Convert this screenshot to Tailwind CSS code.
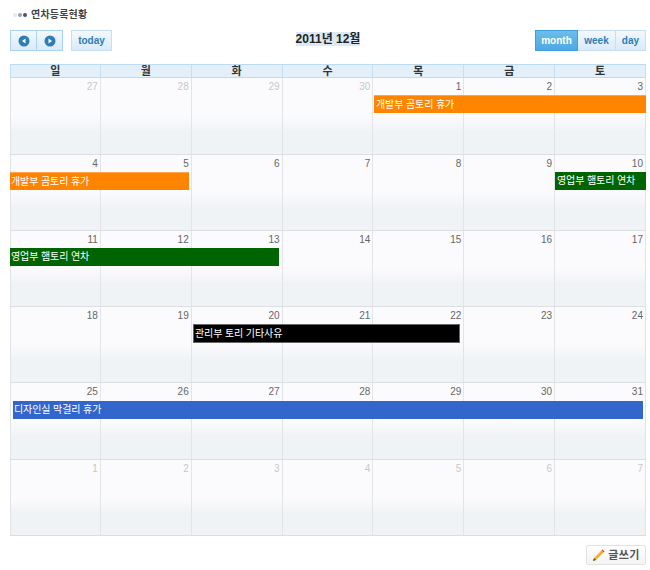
<!DOCTYPE html>
<html lang="ko">
<head>
    <meta charset="UTF-8">
    <title>연차등록현황</title>
    <script src="https://cdn.jsdelivr.net/npm/@tailwindcss/browser@4"></script>
</head>
<body class="bg-white font-['Liberation_Sans','Noto_Sans_CJK_KR',sans-serif]">
    <div class="w-[650px] h-[570px] pl-[10px] pr-[4px] overflow-hidden">
        <!-- Title -->
        <div class="h-[30px] pb-[1px] flex items-center gap-[4px]">
            <div class="flex items-center gap-[1px] ml-[3px]">
                <span class="w-[4px] h-[4px] rounded-full bg-gray-200"></span>
                <span class="w-[4px] h-[4px] rounded-full bg-gray-400"></span>
                <span class="w-[4px] h-[4px] rounded-full bg-gray-600"></span>
            </div>
            <span class="text-[10px] font-bold text-[#444] tracking-[0.2px]">연차등록현황</span>
        </div>

        <!-- Toolbar -->
        <div class="h-[34px] flex justify-between items-start">
            <div class="flex w-[111px]">
                <div class="flex h-[21px] border border-[#a9d3f0] bg-gradient-to-b from-[#f3f9fd] to-[#d9ebf8]">
                    <div class="w-[26px] flex items-center justify-center border-r border-[#a9d3f0]">
                        <svg width="12" height="12" viewBox="0 0 12 12"><circle cx="6" cy="6" r="5.5" fill="#2e7db5"/><path d="M7.5 3.5 L4 6 L7.5 8.5 Z" fill="#fff"/></svg>
                    </div>
                    <div class="w-[25px] flex items-center justify-center">
                        <svg width="12" height="12" viewBox="0 0 12 12"><circle cx="6" cy="6" r="5.5" fill="#2e7db5"/><path d="M4.5 3.5 L8 6 L4.5 8.5 Z" fill="#fff"/></svg>
                    </div>
                </div>
                <div class="ml-[8px] w-[41px] h-[21px] flex items-center justify-center border border-[#c6dff2] bg-gradient-to-b from-[#f3f9fd] to-[#d9ebf8] text-[10px] font-bold text-[#2e7db5]">today</div>
            </div>
            <div class="text-[12px] font-bold leading-[14px] text-[#222] bg-[#dbe9f5] mt-[2px]">2011년 12월</div>
            <div class="flex h-[21px] w-[111px] text-[10px] font-bold">
                <div class="w-[43px] flex items-center justify-center border border-[#3f9ede] bg-gradient-to-b from-[#6cbdea] to-[#4ea9e2] text-white">month</div>
                <div class="w-[38px] flex items-center justify-center border-y border-r border-[#c6dff2] bg-gradient-to-b from-[#f3f9fd] to-[#d9ebf8] text-[#2e7db5]">week</div>
                <div class="flex-1 flex items-center justify-center border-y border-r border-[#c6dff2] bg-gradient-to-b from-[#f3f9fd] to-[#d9ebf8] text-[#2e7db5]">day</div>
            </div>
        </div>

        <!-- Calendar -->
        <div class="w-[636px] border-b border-[#dcdfe2]">
            <div class="grid grid-cols-7 h-[14px] border-y border-[#bcdcf3] bg-[#e3eff9] text-[11px] font-bold leading-[12px] text-[#333] text-center">
                <div class="border-x border-[#c6dff2]">일</div>
                <div class="border-r border-[#c6dff2]">월</div>
                <div class="border-r border-[#c6dff2]">화</div>
                <div class="border-r border-[#c6dff2]">수</div>
                <div class="border-r border-[#c6dff2]">목</div>
                <div class="border-r border-[#c6dff2]">금</div>
                <div class="border-r border-[#c6dff2]">토</div>
            </div>

            <!-- Week 1 -->
            <div class="relative grid grid-cols-7 h-[77px] text-[10px] leading-[17px] text-right text-[#666] border-b border-[#dcdfe2]">
                <div class="border-x border-[#e2e4e7] pr-[2px] text-[#c8c8c8] bg-gradient-to-b from-[#fbfbfd] from-50% to-[#f0f3f6] to-70%">27</div>
                <div class="border-r border-[#e2e4e7] pr-[2px] text-[#c8c8c8] bg-gradient-to-b from-[#fbfbfd] from-50% to-[#f0f3f6] to-70%">28</div>
                <div class="border-r border-[#e2e4e7] pr-[2px] text-[#c8c8c8] bg-gradient-to-b from-[#fbfbfd] from-50% to-[#f0f3f6] to-70%">29</div>
                <div class="border-r border-[#e2e4e7] pr-[2px] text-[#c8c8c8] bg-gradient-to-b from-[#fbfbfd] from-50% to-[#f0f3f6] to-70%">30</div>
                <div class="border-r border-[#e2e4e7] pr-[2px] bg-gradient-to-b from-[#fbfbfd] from-50% to-[#f0f3f6] to-70%">1</div>
                <div class="border-r border-[#e2e4e7] pr-[2px] bg-gradient-to-b from-[#fbfbfd] from-50% to-[#f0f3f6] to-70%">2</div>
                <div class="border-r border-[#e2e4e7] pr-[2px] bg-gradient-to-b from-[#fbfbfd] from-50% to-[#f0f3f6] to-70%">3</div>
                <div class="absolute left-[364px] w-[272px] top-[17px] h-[18px] bg-[#ff8400] border-t border-[#ffa64d] text-white text-left text-[10px] leading-[17px] pl-[2px] tracking-[-0.1px]">개발부 곰토리 휴가</div>
            </div>

            <!-- Week 2 -->
            <div class="relative grid grid-cols-7 h-[76px] text-[10px] leading-[17px] text-right text-[#666] border-b border-[#dcdfe2]">
                <div class="border-x border-[#e2e4e7] pr-[2px] bg-gradient-to-b from-[#fbfbfd] from-50% to-[#f0f3f6] to-70%">4</div>
                <div class="border-r border-[#e2e4e7] pr-[2px] bg-gradient-to-b from-[#fbfbfd] from-50% to-[#f0f3f6] to-70%">5</div>
                <div class="border-r border-[#e2e4e7] pr-[2px] bg-gradient-to-b from-[#fbfbfd] from-50% to-[#f0f3f6] to-70%">6</div>
                <div class="border-r border-[#e2e4e7] pr-[2px] bg-gradient-to-b from-[#fbfbfd] from-50% to-[#f0f3f6] to-70%">7</div>
                <div class="border-r border-[#e2e4e7] pr-[2px] bg-gradient-to-b from-[#fbfbfd] from-50% to-[#f0f3f6] to-70%">8</div>
                <div class="border-r border-[#e2e4e7] pr-[2px] bg-gradient-to-b from-[#fbfbfd] from-50% to-[#f0f3f6] to-70%">9</div>
                <div class="border-r border-[#e2e4e7] pr-[2px] bg-gradient-to-b from-[#fbfbfd] from-50% to-[#f0f3f6] to-70%">10</div>
                <div class="absolute left-0 w-[179px] top-[17px] h-[18px] bg-[#ff8400] border-t border-[#ffa64d] text-white text-left text-[10px] leading-[17px] pl-[1px] tracking-[-0.1px]">개발부 곰토리 휴가</div>
                <div class="absolute left-[545px] w-[91px] top-[17px] h-[18px] bg-[#006400] text-white text-left text-[10px] leading-[18px] pl-[2px] tracking-[-0.1px] whitespace-nowrap overflow-hidden">영업부 햄토리 연차</div>
            </div>

            <!-- Week 3 -->
            <div class="relative grid grid-cols-7 h-[76px] text-[10px] leading-[17px] text-right text-[#666] border-b border-[#dcdfe2]">
                <div class="border-x border-[#e2e4e7] pr-[2px] bg-gradient-to-b from-[#fbfbfd] from-50% to-[#f0f3f6] to-70%">11</div>
                <div class="border-r border-[#e2e4e7] pr-[2px] bg-gradient-to-b from-[#fbfbfd] from-50% to-[#f0f3f6] to-70%">12</div>
                <div class="border-r border-[#e2e4e7] pr-[2px] bg-gradient-to-b from-[#fbfbfd] from-50% to-[#f0f3f6] to-70%">13</div>
                <div class="border-r border-[#e2e4e7] pr-[2px] bg-gradient-to-b from-[#fbfbfd] from-50% to-[#f0f3f6] to-70%">14</div>
                <div class="border-r border-[#e2e4e7] pr-[2px] bg-gradient-to-b from-[#fbfbfd] from-50% to-[#f0f3f6] to-70%">15</div>
                <div class="border-r border-[#e2e4e7] pr-[2px] bg-gradient-to-b from-[#fbfbfd] from-50% to-[#f0f3f6] to-70%">16</div>
                <div class="border-r border-[#e2e4e7] pr-[2px] bg-gradient-to-b from-[#fbfbfd] from-50% to-[#f0f3f6] to-70%">17</div>
                <div class="absolute left-0 w-[269px] top-[17px] h-[18px] bg-[#006400] text-white text-left text-[10px] leading-[18px] pl-[1px] tracking-[-0.1px]">영업부 햄토리 연차</div>
            </div>

            <!-- Week 4 -->
            <div class="relative grid grid-cols-7 h-[76px] text-[10px] leading-[17px] text-right text-[#666] border-b border-[#dcdfe2]">
                <div class="border-x border-[#e2e4e7] pr-[2px] bg-gradient-to-b from-[#fbfbfd] from-50% to-[#f0f3f6] to-70%">18</div>
                <div class="border-r border-[#e2e4e7] pr-[2px] bg-gradient-to-b from-[#fbfbfd] from-50% to-[#f0f3f6] to-70%">19</div>
                <div class="border-r border-[#e2e4e7] pr-[2px] bg-gradient-to-b from-[#fbfbfd] from-50% to-[#f0f3f6] to-70%">20</div>
                <div class="border-r border-[#e2e4e7] pr-[2px] bg-gradient-to-b from-[#fbfbfd] from-50% to-[#f0f3f6] to-70%">21</div>
                <div class="border-r border-[#e2e4e7] pr-[2px] bg-gradient-to-b from-[#fbfbfd] from-50% to-[#f0f3f6] to-70%">22</div>
                <div class="border-r border-[#e2e4e7] pr-[2px] bg-gradient-to-b from-[#fbfbfd] from-50% to-[#f0f3f6] to-70%">23</div>
                <div class="border-r border-[#e2e4e7] pr-[2px] bg-gradient-to-b from-[#fbfbfd] from-50% to-[#f0f3f6] to-70%">24</div>
                <div class="absolute left-[183px] w-[267px] top-[17px] h-[19px] bg-black border border-[#666] text-white text-left text-[10px] leading-[17px] pl-[1px] tracking-[-0.1px]">관리부 토리 기타사유</div>
            </div>

            <!-- Week 5 -->
            <div class="relative grid grid-cols-7 h-[77px] text-[10px] leading-[17px] text-right text-[#666] border-b border-[#dcdfe2]">
                <div class="border-x border-[#e2e4e7] pr-[2px] bg-gradient-to-b from-[#fbfbfd] from-50% to-[#f0f3f6] to-70%">25</div>
                <div class="border-r border-[#e2e4e7] pr-[2px] bg-gradient-to-b from-[#fbfbfd] from-50% to-[#f0f3f6] to-70%">26</div>
                <div class="border-r border-[#e2e4e7] pr-[2px] bg-gradient-to-b from-[#fbfbfd] from-50% to-[#f0f3f6] to-70%">27</div>
                <div class="border-r border-[#e2e4e7] pr-[2px] bg-gradient-to-b from-[#fbfbfd] from-50% to-[#f0f3f6] to-70%">28</div>
                <div class="border-r border-[#e2e4e7] pr-[2px] bg-gradient-to-b from-[#fbfbfd] from-50% to-[#f0f3f6] to-70%">29</div>
                <div class="border-r border-[#e2e4e7] pr-[2px] bg-gradient-to-b from-[#fbfbfd] from-50% to-[#f0f3f6] to-70%">30</div>
                <div class="border-r border-[#e2e4e7] pr-[2px] bg-gradient-to-b from-[#fbfbfd] from-50% to-[#f0f3f6] to-70%">31</div>
                <div class="absolute left-[3px] w-[630px] top-[18px] h-[18px] bg-[#3366cc] text-white text-left text-[10px] leading-[18px] pl-[1px] tracking-[-0.1px]">디자인실 막걸리 휴가</div>
            </div>

            <!-- Week 6 -->
            <div class="grid grid-cols-7 h-[75px] text-[10px] leading-[17px] text-right text-[#c8c8c8]">
                <div class="border-x border-[#e2e4e7] pr-[2px] bg-gradient-to-b from-[#fbfbfd] from-50% to-[#f0f3f6] to-70%">1</div>
                <div class="border-r border-[#e2e4e7] pr-[2px] bg-gradient-to-b from-[#fbfbfd] from-50% to-[#f0f3f6] to-70%">2</div>
                <div class="border-r border-[#e2e4e7] pr-[2px] bg-gradient-to-b from-[#fbfbfd] from-50% to-[#f0f3f6] to-70%">3</div>
                <div class="border-r border-[#e2e4e7] pr-[2px] bg-gradient-to-b from-[#fbfbfd] from-50% to-[#f0f3f6] to-70%">4</div>
                <div class="border-r border-[#e2e4e7] pr-[2px] bg-gradient-to-b from-[#fbfbfd] from-50% to-[#f0f3f6] to-70%">5</div>
                <div class="border-r border-[#e2e4e7] pr-[2px] bg-gradient-to-b from-[#fbfbfd] from-50% to-[#f0f3f6] to-70%">6</div>
                <div class="border-r border-[#e2e4e7] pr-[2px] bg-gradient-to-b from-[#fbfbfd] from-50% to-[#f0f3f6] to-70%">7</div>
            </div>
        </div>

        <!-- Write button -->
        <div class="flex justify-end mt-[9px]">
            <div class="w-[60px] h-[20px] flex items-center justify-center gap-[3px] border border-[#e2e2e2] rounded-[2px] bg-gradient-to-b from-white to-[#f3f3f3] text-[11px] font-bold text-[#555] tracking-[0.4px]">
                <svg width="13" height="13" viewBox="0 0 13 13"><path d="M1 12 L2 9 L9.5 1.5 L11.5 3.5 L4 11 Z" fill="#f0b030"/><path d="M9.5 1.5 L10.5 0.5 L12.5 2.5 L11.5 3.5 Z" fill="#d9432f"/><path d="M1 12 L2 9 L4 11 Z" fill="#5a4a3a"/></svg>
                <span>글쓰기</span>
            </div>
        </div>
    </div>
</body>
</html>
